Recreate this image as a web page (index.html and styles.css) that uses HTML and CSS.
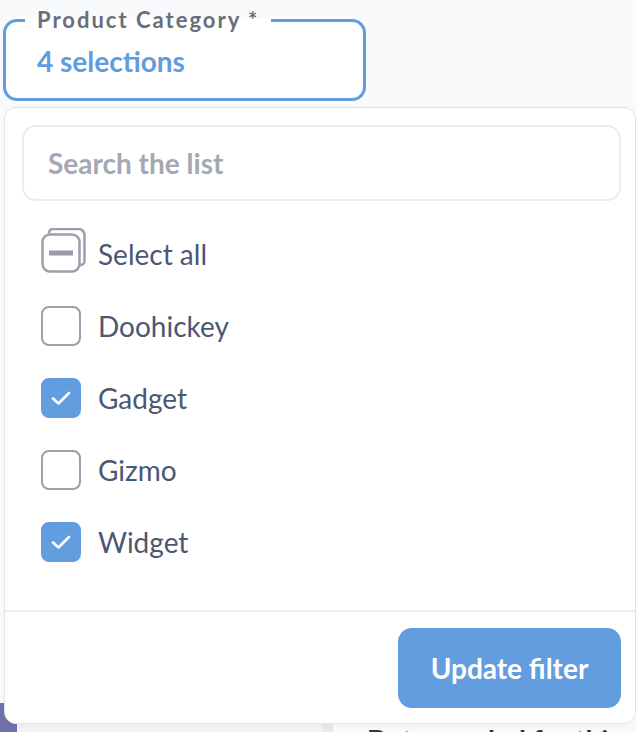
FILE: index.html
```html
<!DOCTYPE html>
<html lang="en">
<head>
<meta charset="utf-8">
<title>Product Category filter</title>
<link rel="stylesheet" href="styles.css">
</head>
<body>
<div class="page">
  <fieldset class="field">
    <legend class="field-label">Product Category *</legend>
    <div class="field-value">4 selections</div>
  </fieldset>

  <div class="dash">
    <div class="dash-rail"></div>
    <div class="dash-panel"></div>
    <div class="dash-sep"></div>
    <div class="dash-card">Data needed for this</div>
  </div>

  <div class="popover">
    <div class="pop-body">
      <input class="search" type="text" placeholder="Search the list">
      <ul class="options">
        <li class="option">
          <svg class="cb-multi" width="46" height="46" viewBox="0 0 46 46" aria-hidden="true">
            <path d="M8 5.5 V5 a4 4 0 0 1 4 -4 H37.5 a6 6 0 0 1 6 6 V33 a4 4 0 0 1 -4 4 H39" fill="none" stroke="#9aa0ae" stroke-width="2.5"/>
            <rect x="1.5" y="6.5" width="37" height="37" rx="7.5" fill="#fff" stroke="#9aa0ae" stroke-width="2.5"/>
            <rect x="8" y="22.5" width="24" height="5" fill="#959bab"/>
          </svg>
          <span class="opt-label">Select all</span>
        </li>
        <li class="option">
          <span class="cb"></span>
          <span class="opt-label">Doohickey</span>
        </li>
        <li class="option">
          <span class="cb cb-on">
            <svg width="20" height="14" viewBox="0 0 20 14" aria-hidden="true"><path d="M2 7.5 L7.5 12.5 L18 2" fill="none" stroke="#fff" stroke-width="2.6" stroke-linecap="round" stroke-linejoin="round"/></svg>
          </span>
          <span class="opt-label">Gadget</span>
        </li>
        <li class="option">
          <span class="cb"></span>
          <span class="opt-label">Gizmo</span>
        </li>
        <li class="option">
          <span class="cb cb-on">
            <svg width="20" height="14" viewBox="0 0 20 14" aria-hidden="true"><path d="M2 7.5 L7.5 12.5 L18 2" fill="none" stroke="#fff" stroke-width="2.6" stroke-linecap="round" stroke-linejoin="round"/></svg>
          </span>
          <span class="opt-label">Widget</span>
        </li>
      </ul>
    </div>
    <div class="pop-foot">
      <button class="btn-primary" type="button">Update filter</button>
    </div>
  </div>
</div>
</body>
</html>
```
FILE: styles.css
```css
html, body {
  margin: 0;
  padding: 0;
}
body {
  background: #f9fafb;
  font-family: Lato, "Open Sans", sans-serif;
  width: 636px;
  height: 732px;
  overflow: hidden;
}
.page {
  position: relative;
  width: 636px;
  height: 732px;
  overflow: hidden;
}

/* filter field */
.field {
  box-sizing: border-box;
  width: 363px;
  margin: 9px 0 0 3px;
  padding: 13px 0 20px 31px;
  border: 3px solid #629de0;
  border-radius: 14px;
  background: #fff;
  min-width: 0;
}
.field-label {
  margin-left: -12px;
  padding: 0 12px;
  font-size: 22px;
  line-height: 22px;
  font-weight: 700;
  letter-spacing: 2px;
  color: #696e7b;
}
.field-value {
  font-size: 28px;
  line-height: 34px;
  font-weight: 700;
  color: #5f9ce0;
}

/* background dashboard peeking out below the popover */
.dash {
  display: flex;
  height: 40px;
  margin-top: 600px;
}
.dash-rail {
  width: 17px;
  margin-top: 2px;
  background: #7072ad;
}
.dash-panel {
  width: 306px;
  background: #f3f3f5;
}
.dash-sep {
  width: 10px;
  background: #e9e9ec;
}
.dash-card {
  flex: 1;
  padding: 22px 0 0 34px;
  font-size: 28px;
  line-height: 34px;
  font-weight: 700;
  color: #2e353b;
  white-space: nowrap;
}

/* dropdown popover */
.popover {
  position: absolute;
  left: 4px;
  top: 107px;
  width: 632px;
  box-sizing: border-box;
  background: #fff;
  border: 1px solid #e3e3e7;
  border-radius: 12px;
  box-shadow: 0 2px 6px rgba(0, 0, 0, 0.04);
}
.pop-body {
  padding: 17px 14px 32px 17px;
}
.search {
  display: block;
  box-sizing: border-box;
  width: 100%;
  height: 76px;
  margin: 0;
  padding: 0 0 0 24px;
  border: 2px solid #ececef;
  border-radius: 14px;
  outline: none;
  background: #fff;
  font-family: Lato, "Open Sans", sans-serif;
  font-size: 28px;
  font-weight: 700;
  color: #4c5773;
}
.search::placeholder {
  color: #a4a8b5;
}
.options {
  list-style: none;
  margin: 17px 0 0 0;
  padding: 0;
}
.option {
  display: flex;
  align-items: center;
  height: 72px;
  padding-left: 19px;
}
.cb {
  box-sizing: border-box;
  width: 40px;
  height: 40px;
  border: 2.5px solid #9aa0ae;
  border-radius: 8px;
  background: #fff;
  display: flex;
  align-items: center;
  justify-content: center;
  flex: none;
}
.cb-on {
  background: #629de0;
  border-color: #629de0;
}
.cb-multi {
  flex: none;
  margin-top: -6px;
  margin-right: -6px;
}
.opt-label {
  margin-left: 17px;
  font-size: 28px;
  line-height: 34px;
  color: #4c5773;
}

.pop-foot {
  display: flex;
  justify-content: flex-end;
  padding: 16px 14px 15px 14px;
  border-top: 2px solid #eeeef0;
}
.btn-primary {
  width: 223px;
  height: 80px;
  border: none;
  border-radius: 14px;
  background: #629de0;
  color: #fff;
  font-family: Lato, "Open Sans", sans-serif;
  font-size: 28px;
  font-weight: 700;
  cursor: pointer;
}
```
